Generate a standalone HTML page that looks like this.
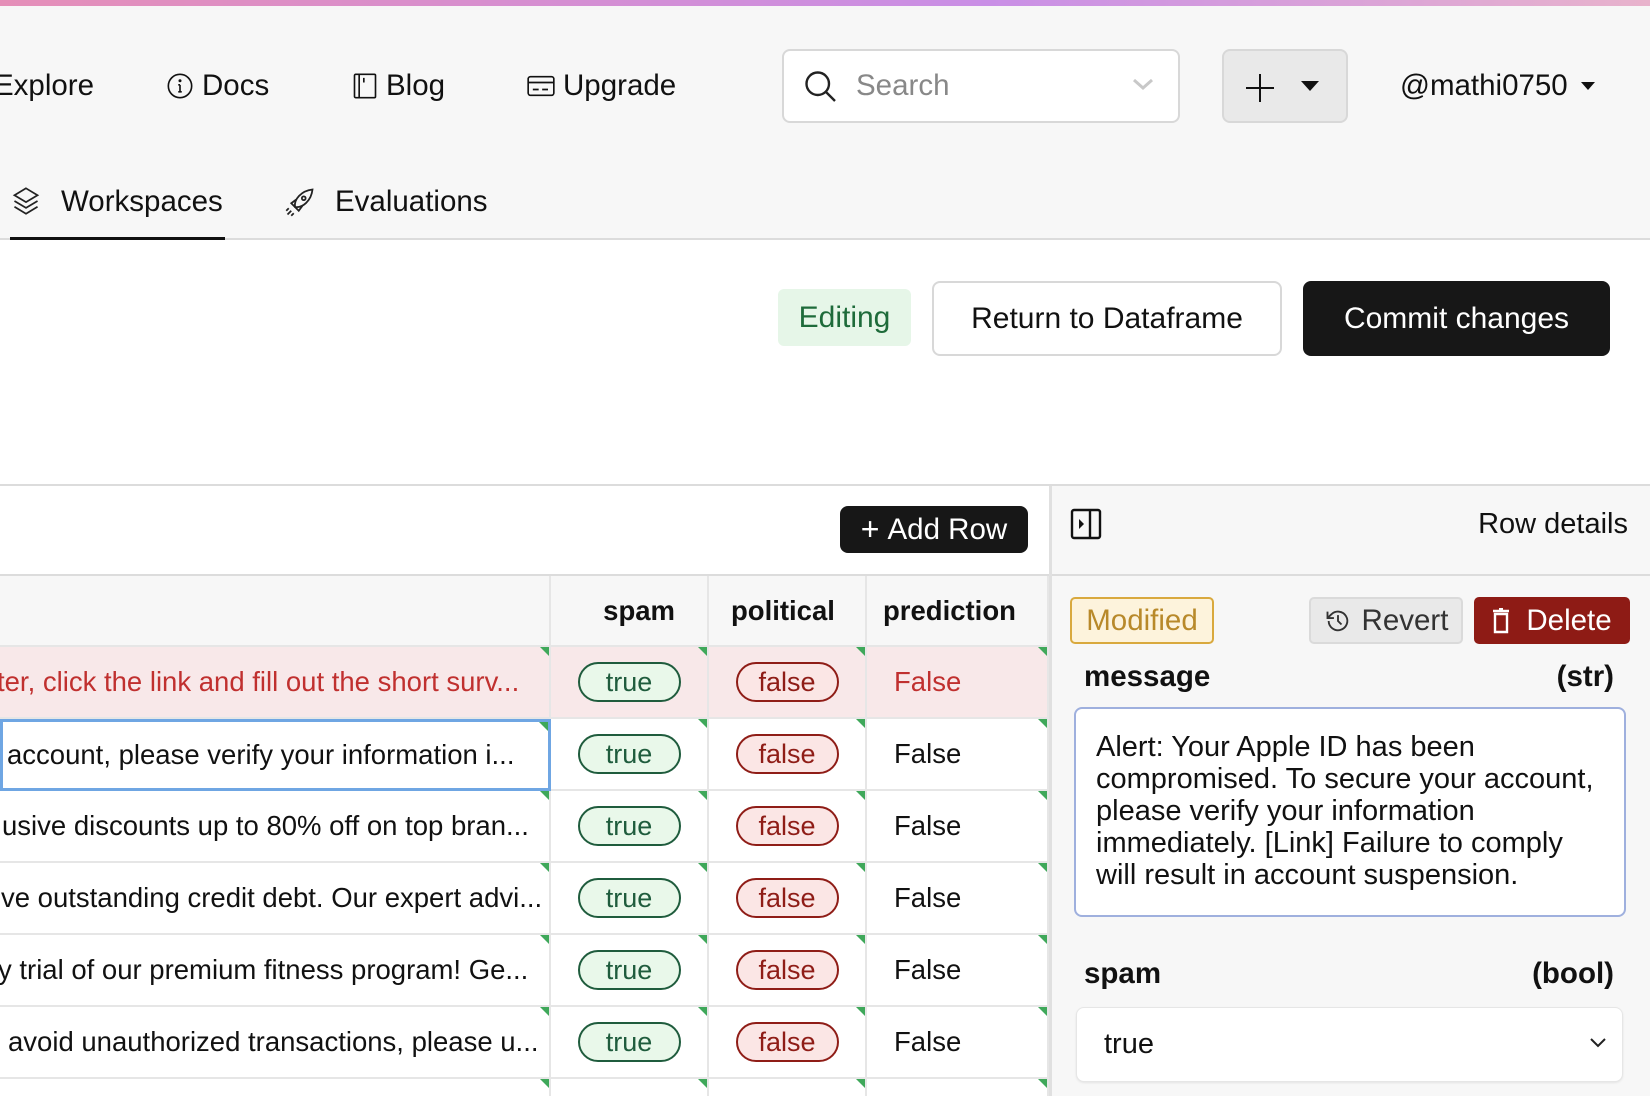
<!DOCTYPE html>
<html><head><meta charset="utf-8"><style>
*{box-sizing:border-box;margin:0;padding:0}
html,body{width:1650px;height:1096px;overflow:hidden}
body{background:#fff;font-family:"Liberation Sans",sans-serif;color:#111;position:relative}
.a{position:absolute}
.top{left:0;top:0;width:1650px;height:6px;background:linear-gradient(90deg,#e58fb8,#c98fe6 60%,#e8b3cc)}
.hdr{left:0;top:6px;width:1650px;height:234px;background:#f7f7f7;border-bottom:2px solid #dcdcdc}
.nav{font-size:29.5px;top:68px;line-height:36px;display:flex;align-items:center;gap:8px}
.btn{display:flex;align-items:center;justify-content:center;border-radius:8px;font-size:30px}
.cell{position:absolute;overflow:hidden;white-space:nowrap;font-size:27.5px;display:flex;align-items:center;border-right:2px solid #e6e6e6;border-bottom:2px solid #e6e6e6}
.tri{position:absolute;right:0;top:0;width:0;height:0;border-top:9px solid #3fa85a;border-left:9px solid transparent}
.pt{display:inline-block;width:103px;height:40px;border-radius:20px;border:2px solid #1f5c3d;background:#e9f8ea;color:#1f5c3d;text-align:center;line-height:36px;font-size:27px}
.pf{display:inline-block;width:103px;height:40px;border-radius:20px;border:2px solid #8f1d17;background:#fbe6e5;color:#8f1d17;text-align:center;line-height:36px;font-size:27px}
</style></head><body>
<div class="a top"></div>
<div class="a hdr"></div>
<div class="a nav" style="left:-6px">Explore</div>
<div class="a nav" style="left:166px"><svg width="28" height="28" viewBox="0 0 24 24" fill="none" stroke="#111" stroke-width="1.4"><circle cx="12" cy="12" r="10"/><path d="M12 11v6M10.5 17h3M10.5 11H12"/><circle cx="12" cy="7.5" r=".6" fill="#111"/></svg>Docs</div>
<div class="a nav" style="left:352px"><svg width="26" height="28" viewBox="0 0 22 24" fill="none" stroke="#111" stroke-width="1.4"><rect x="2" y="2" width="18" height="20" rx="1"/><path d="M6 2v20M10 5v4"/></svg>Blog</div>
<div class="a nav" style="left:527px"><svg width="28" height="24" viewBox="0 0 24 20" fill="none" stroke="#111" stroke-width="1.4"><rect x="1" y="2" width="22" height="16" rx="2"/><path d="M1 7h22M5 13h5M13 13h5"/></svg>Upgrade</div>
<div class="a" style="left:782px;top:49px;width:398px;height:74px;background:#fff;border:2px solid #d8d8d8;border-radius:8px"></div>
<svg class="a" style="left:802px;top:68px" width="36" height="36" viewBox="0 0 24 24" fill="none" stroke="#222" stroke-width="1.6"><circle cx="10.5" cy="10.5" r="7.5"/><path d="M16 16l6 6"/></svg>
<div class="a" style="left:856px;top:68px;font-size:29.5px;color:#888;line-height:36px">Search</div>
<svg class="a" style="left:1131px;top:76px" width="24" height="16" viewBox="0 0 24 16" fill="none" stroke="#c8c8c8" stroke-width="3"><path d="M3 4l9 8 9-8"/></svg>
<div class="a" style="left:1222px;top:49px;width:126px;height:74px;background:#e9e9e9;border:2px solid #d8d8d8;border-radius:8px"></div>
<svg class="a" style="left:1245px;top:73px" width="30" height="30" viewBox="0 0 30 30" stroke="#111" stroke-width="2"><path d="M15 1v28M1 15h28"/></svg>
<svg class="a" style="left:1301px;top:81px" width="18" height="10"><path d="M0 0h18L9 10z" fill="#111"/></svg>
<div class="a" style="left:1400px;top:68px;font-size:29.5px;line-height:36px">@mathi0750</div>
<svg class="a" style="left:1581px;top:82px" width="14" height="8"><path d="M0 0h14L7 8z" fill="#111"/></svg>
<svg class="a" style="left:12px;top:186px" width="28" height="30" viewBox="0 0 24 26" fill="none" stroke="#222" stroke-width="1.5"><path d="M12 2l10 6-10 6-10-6z"/><path d="M2 13l10 6 10-6M2 18l10 6 10-6"/></svg>
<div class="a" style="left:61px;top:184px;font-size:29.5px;line-height:36px">Workspaces</div>
<div class="a" style="left:10px;top:237px;width:215px;height:3px;background:#111"></div>
<svg class="a" style="left:285px;top:187px" width="30" height="30" viewBox="0 0 24 24" fill="none" stroke="#222" stroke-width="1.4"><path d="M8 16c-1-6 5-13 14-14-1 9-8 15-14 14z"/><path d="M8 16l-3-3 4-3M8 16l3 3 3-4"/><circle cx="15" cy="9" r="1.5"/><path d="M5 19l-3 3M7 21l-2 2M3 17l-2 2"/></svg>
<div class="a" style="left:335px;top:184px;font-size:29.5px;line-height:36px">Evaluations</div>

<div class="a btn" style="left:778px;top:289px;width:133px;height:57px;background:#e6f6e8;color:#1e6b3a;border-radius:6px">Editing</div>
<div class="a btn" style="left:932px;top:281px;width:350px;height:75px;background:#fff;border:2px solid #d8d8d8">Return to Dataframe</div>
<div class="a btn" style="left:1303px;top:281px;width:307px;height:75px;background:#171717;color:#fff">Commit changes</div>

<div class="a" style="left:0;top:484px;width:1650px;height:2px;background:#dcdcdc"></div>
<div class="a" style="left:1049px;top:486px;width:601px;height:610px;background:#f7f7f7;border-left:3px solid #e0e0e0"></div>
<div class="a btn" style="left:840px;top:506px;width:188px;height:47px;background:#171717;color:#fff;font-size:29.5px;gap:8px"><span style="font-size:32px;font-weight:300">+</span>Add Row</div>
<div class="a" style="left:0;top:574px;width:1049px;height:2px;background:#dcdcdc"></div>
<div class="a" style="left:1052px;top:574px;width:598px;height:2px;background:#dcdcdc"></div>
<svg class="a" style="left:1070px;top:508px" width="32" height="32" viewBox="0 0 32 32" fill="none" stroke="#111" stroke-width="2.4"><rect x="2" y="2" width="28" height="28" rx="2"/><path d="M20 2v28"/><path d="M9 11l5 5-5 5z" fill="#111" stroke="none"/></svg>
<div class="a" style="left:1380px;top:506px;width:248px;text-align:right;font-size:29px;line-height:36px">Row details</div>

<div class="cell" style="left:0;top:576px;width:551px;height:71px;background:#f7f7f7"></div>
<div class="cell" style="left:551px;top:576px;width:158px;height:71px;background:#f7f7f7;font-weight:bold;justify-content:flex-end;padding-right:32px">spam</div>
<div class="cell" style="left:709px;top:576px;width:158px;height:71px;background:#f7f7f7;font-weight:bold;padding-left:22px">political</div>
<div class="cell" style="left:867px;top:576px;width:182px;height:71px;background:#f7f7f7;font-weight:bold;padding-left:16px">prediction</div>

<div class="cell" style="left:0;top:647px;width:551px;height:72px;background:#f8e8e9;color:#c0302f"><span style="margin-left:-3px">ter, click the link and fill out the short surv...</span><i class="tri"></i></div>
<div class="cell" style="left:551px;top:647px;width:158px;height:72px;background:#f8e8e9;justify-content:center"><span class="pt">true</span><i class="tri"></i></div>
<div class="cell" style="left:709px;top:647px;width:158px;height:72px;background:#f8e8e9;justify-content:center"><span class="pf">false</span><i class="tri"></i></div>
<div class="cell" style="left:867px;top:647px;width:182px;height:72px;background:#f8e8e9;color:#c0302f;padding-left:27px">False<i class="tri"></i></div>

<div class="cell" style="left:0;top:719px;width:551px;height:72px;border:3px solid #6fa6e3"><span style="margin-left:4px">account, please verify your information i...</span><i class="tri"></i></div>
<div class="cell" style="left:551px;top:719px;width:158px;height:72px;justify-content:center"><span class="pt">true</span><i class="tri"></i></div>
<div class="cell" style="left:709px;top:719px;width:158px;height:72px;justify-content:center"><span class="pf">false</span><i class="tri"></i></div>
<div class="cell" style="left:867px;top:719px;width:182px;height:72px;padding-left:27px">False<i class="tri"></i></div>

<div class="cell" style="left:0;top:791px;width:551px;height:72px"><span style="margin-left:2px">usive discounts up to 80% off on top bran...</span><i class="tri"></i></div>
<div class="cell" style="left:551px;top:791px;width:158px;height:72px;justify-content:center"><span class="pt">true</span><i class="tri"></i></div>
<div class="cell" style="left:709px;top:791px;width:158px;height:72px;justify-content:center"><span class="pf">false</span><i class="tri"></i></div>
<div class="cell" style="left:867px;top:791px;width:182px;height:72px;padding-left:27px">False<i class="tri"></i></div>

<div class="cell" style="left:0;top:863px;width:551px;height:72px"><span style="margin-left:1px">ve outstanding credit debt. Our expert advi...</span><i class="tri"></i></div>
<div class="cell" style="left:551px;top:863px;width:158px;height:72px;justify-content:center"><span class="pt">true</span><i class="tri"></i></div>
<div class="cell" style="left:709px;top:863px;width:158px;height:72px;justify-content:center"><span class="pf">false</span><i class="tri"></i></div>
<div class="cell" style="left:867px;top:863px;width:182px;height:72px;padding-left:27px">False<i class="tri"></i></div>

<div class="cell" style="left:0;top:935px;width:551px;height:72px"><span style="margin-left:-2px">y trial of our premium fitness program! Ge...</span><i class="tri"></i></div>
<div class="cell" style="left:551px;top:935px;width:158px;height:72px;justify-content:center"><span class="pt">true</span><i class="tri"></i></div>
<div class="cell" style="left:709px;top:935px;width:158px;height:72px;justify-content:center"><span class="pf">false</span><i class="tri"></i></div>
<div class="cell" style="left:867px;top:935px;width:182px;height:72px;padding-left:27px">False<i class="tri"></i></div>

<div class="cell" style="left:0;top:1007px;width:551px;height:72px"><span style="margin-left:8px">avoid unauthorized transactions, please u...</span><i class="tri"></i></div>
<div class="cell" style="left:551px;top:1007px;width:158px;height:72px;justify-content:center"><span class="pt">true</span><i class="tri"></i></div>
<div class="cell" style="left:709px;top:1007px;width:158px;height:72px;justify-content:center"><span class="pf">false</span><i class="tri"></i></div>
<div class="cell" style="left:867px;top:1007px;width:182px;height:72px;padding-left:27px">False<i class="tri"></i></div>

<div class="cell" style="left:0;top:1079px;width:551px;height:17px;border-bottom:none"><i class="tri"></i></div>
<div class="cell" style="left:551px;top:1079px;width:158px;height:17px;border-bottom:none"><i class="tri"></i></div>
<div class="cell" style="left:709px;top:1079px;width:158px;height:17px;border-bottom:none"><i class="tri"></i></div>
<div class="cell" style="left:867px;top:1079px;width:182px;height:17px;border-bottom:none"><i class="tri"></i></div>

<div class="a btn" style="left:1070px;top:597px;width:144px;height:47px;background:#fdf3dc;border:2px solid #d9a93e;color:#b8892a;border-radius:5px;font-size:29.5px">Modified</div>
<div class="a btn" style="left:1309px;top:597px;width:154px;height:47px;background:#e9e9e9;border:2px solid #dadada;color:#333;border-radius:5px;font-size:29.5px;gap:10px"><svg width="28" height="28" viewBox="0 0 24 24" fill="none" stroke="#333" stroke-width="1.6"><path d="M4 12a8 8 0 1 0 2.3-5.7L3 9.5"/><path d="M3 4v5.5h5.5" /><path d="M12 7v5l3 3"/></svg>Revert</div>
<div class="a btn" style="left:1474px;top:597px;width:156px;height:47px;background:#8e1b15;color:#fff;border-radius:5px;font-size:29.5px;gap:16px"><svg width="18" height="26" viewBox="0 0 18 26" fill="none" stroke="#fff" stroke-width="2.4"><path d="M3 6h12v18H3zM1 3h16M7 1h4"/></svg>Delete</div>
<div class="a" style="left:1084px;top:660px;font-size:29.5px;font-weight:bold;line-height:34px">message</div>
<div class="a" style="left:1480px;top:660px;width:134px;text-align:right;font-size:29.5px;font-weight:bold;line-height:34px">(str)</div>
<div class="a" style="left:1074px;top:707px;width:552px;height:210px;background:#fff;border:2px solid #9fb0de;border-radius:8px;padding:22px 18px 22px 20px;font-size:29px;line-height:32px">Alert: Your Apple ID has been compromised. To secure your account, please verify your information immediately. [Link] Failure to comply will result in account suspension.</div>
<div class="a" style="left:1084px;top:957px;font-size:29.5px;font-weight:bold;line-height:34px">spam</div>
<div class="a" style="left:1480px;top:957px;width:134px;text-align:right;font-size:29.5px;font-weight:bold;line-height:34px">(bool)</div>
<div class="a" style="left:1076px;top:1007px;width:547px;height:75px;background:#fff;border:1px solid #e6e6e6;border-radius:8px;box-shadow:0 1px 2px rgba(0,0,0,.08)"></div>
<div class="a" style="left:1104px;top:1027px;font-size:29px;line-height:34px">true</div>
<svg class="a" style="left:1589px;top:1037px" width="18" height="12" viewBox="0 0 18 12" fill="none" stroke="#222" stroke-width="2"><path d="M2 2l7 7 7-7"/></svg>
</body></html>
